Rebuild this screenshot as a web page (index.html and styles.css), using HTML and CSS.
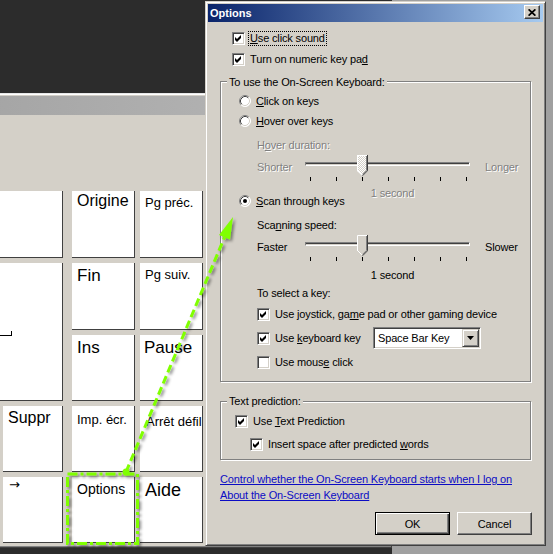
FILE: index.html
```
<!DOCTYPE html>
<html>
<head>
<meta charset="utf-8">
<title>Options</title>
<link rel="stylesheet" href="styles.css">
</head>
<body>
<div class="screen">
  <div class="osk">
    <div class="osk-title"></div>
    <div class="osk-body">
      <div class="keys">
        <div class="key col-wide row1"></div>
        <div class="key col-b row1 k-origine">Origine</div>
        <div class="key col-c row1 k-pgprec">Pg préc.</div>
        <div class="key col-wide rows23 k-enter"><span class="enter-glyph"></span></div>
        <div class="key col-b row2 k-fin">Fin</div>
        <div class="key col-c row2 k-pgsuiv">Pg suiv.</div>
        <div class="key col-b row3 k-ins">Ins</div>
        <div class="key col-c row3 k-pause">Pause</div>
        <div class="key col-a row4 k-suppr">Suppr</div>
        <div class="key col-b row4 k-imp">Imp. écr.</div>
        <div class="key col-c row4 k-arret">Arrêt défil</div>
        <div class="key col-a row5 k-arrow">→</div>
        <div class="key col-b row5 k-options">Options</div>
        <div class="key col-c row5 k-aide">Aide</div>
      </div>
    </div>
  </div>

  <div class="dialog">
    <div class="titlebar">
      <span class="title-text">Options</span>
      <span class="close-btn"><svg width="8" height="7" viewBox="0 0 8 7"><path d="M0.6 0.3 L7.4 6.7 M7.4 0.3 L0.6 6.7" stroke="#000" stroke-width="1.7" fill="none"/></svg></span>
    </div>
    <div class="dlg-body">
      <div class="row top-cb first">
        <span class="cb"><svg width="11" height="11" viewBox="0 0 11 11"><polygon points="2,4 4,6 8,2 8,5 4,9 2,7" fill="#000"/></svg></span>
        <span class="focus"><u>U</u>se click sound</span>
      </div>
      <div class="row top-cb second">
        <span class="cb"><svg width="11" height="11" viewBox="0 0 11 11"><polygon points="2,4 4,6 8,2 8,5 4,9 2,7" fill="#000"/></svg></span>
        <span class="txt">Turn on numeric key pa<u>d</u></span>
      </div>

      <div class="group g1">
        <div class="legend">To use the On-Screen Keyboard:</div>
        <div class="row radio-row rr1">
          <span class="radio"><svg width="12" height="12" viewBox="0 0 12 12"><circle cx="6" cy="6" r="5.5" fill="#fff"/><path d="M2.11 9.89 A5.5 5.5 0 0 1 9.89 2.11" stroke="#808080" fill="none"/><path d="M9.89 2.11 A5.5 5.5 0 0 1 2.11 9.89" stroke="#fff" fill="none"/><path d="M2.82 9.18 A4.5 4.5 0 0 1 9.18 2.82" stroke="#404040" fill="none"/><path d="M9.18 2.82 A4.5 4.5 0 0 1 2.82 9.18" stroke="#d4d0c8" fill="none"/></svg></span>
          <span class="txt"><u>C</u>lick on keys</span>
        </div>
        <div class="row radio-row">
          <span class="radio"><svg width="12" height="12" viewBox="0 0 12 12"><circle cx="6" cy="6" r="5.5" fill="#fff"/><path d="M2.11 9.89 A5.5 5.5 0 0 1 9.89 2.11" stroke="#808080" fill="none"/><path d="M9.89 2.11 A5.5 5.5 0 0 1 2.11 9.89" stroke="#fff" fill="none"/><path d="M2.82 9.18 A4.5 4.5 0 0 1 9.18 2.82" stroke="#404040" fill="none"/><path d="M9.18 2.82 A4.5 4.5 0 0 1 2.82 9.18" stroke="#d4d0c8" fill="none"/></svg></span>
          <span class="txt"><u>H</u>over over keys</span>
        </div>
        <div class="sub-label dis lab-hover">H<u>o</u>ver duration:</div>
        <div class="slider">
          <span class="sl-lab dis">Shorter</span>
          <div class="track">
            <div class="channel"></div>
            <div class="ticks"><i></i><i></i><i></i><i></i><i></i><i></i><i></i></div>
            <svg class="thumb" width="11" height="21" viewBox="0 0 11 21">
              <defs><pattern id="dither" width="2" height="2" patternUnits="userSpaceOnUse"><rect width="2" height="2" fill="#d4d0c8"/><rect width="1" height="1" fill="#fff"/><rect x="1" y="1" width="1" height="1" fill="#fff"/></pattern></defs>
              <polygon points="0,0 11,0 11,16 5.5,21 0,16" fill="url(#dither)"/>
              <path d="M0.5 16 V0.5 H10" stroke="#fff" fill="none"/>
              <path d="M0.5 15.5 L5.5 20.5" stroke="#fff" fill="none"/>
              <path d="M10.5 0 V15.8 L5.5 20.8" stroke="#404040" fill="none"/>
              <path d="M9.5 1 V15.4 L5.5 19.4" stroke="#808080" fill="none"/>
            </svg>
          </div>
          <span class="sl-lab right dis">Longer</span>
        </div>
        <div class="value dis">1 second</div>
        <div class="row radio-row rr3">
          <span class="radio"><svg width="12" height="12" viewBox="0 0 12 12"><circle cx="6" cy="6" r="5.5" fill="#fff"/><path d="M2.11 9.89 A5.5 5.5 0 0 1 9.89 2.11" stroke="#808080" fill="none"/><path d="M9.89 2.11 A5.5 5.5 0 0 1 2.11 9.89" stroke="#fff" fill="none"/><path d="M2.82 9.18 A4.5 4.5 0 0 1 9.18 2.82" stroke="#404040" fill="none"/><path d="M9.18 2.82 A4.5 4.5 0 0 1 2.82 9.18" stroke="#d4d0c8" fill="none"/><circle cx="6" cy="6" r="2" fill="#000"/></svg></span>
          <span class="txt"><u>S</u>can through keys</span>
        </div>
        <div class="sub-label lab-scan">Sca<u>n</u>ning speed:</div>
        <div class="slider s2">
          <span class="sl-lab">Faster</span>
          <div class="track">
            <div class="channel"></div>
            <div class="ticks"><i></i><i></i><i></i><i></i><i></i><i></i><i></i></div>
            <svg class="thumb" width="11" height="21" viewBox="0 0 11 21">
              <polygon points="0,0 11,0 11,16 5.5,21 0,16" fill="#d4d0c8"/>
              <path d="M0.5 16 V0.5 H10" stroke="#fff" fill="none"/>
              <path d="M0.5 15.5 L5.5 20.5" stroke="#fff" fill="none"/>
              <path d="M10.5 0 V15.8 L5.5 20.8" stroke="#404040" fill="none"/>
              <path d="M9.5 1 V15.4 L5.5 19.4" stroke="#808080" fill="none"/>
            </svg>
          </div>
          <span class="sl-lab right">Slower</span>
        </div>
        <div class="value v2">1 second</div>
        <div class="sub-label lab-select">To select a key:</div>
        <div class="row sub-cb cb-joy">
          <span class="cb"><svg width="11" height="11" viewBox="0 0 11 11"><polygon points="2,4 4,6 8,2 8,5 4,9 2,7" fill="#000"/></svg></span>
          <span class="txt">Use joystick, ga<u>m</u>e pad or other gaming device</span>
        </div>
        <div class="row sub-cb cb-kb">
          <span class="cb"><svg width="11" height="11" viewBox="0 0 11 11"><polygon points="2,4 4,6 8,2 8,5 4,9 2,7" fill="#000"/></svg></span>
          <span class="txt kb-label">Use <u>k</u>eyboard key</span>
          <div class="combo">
            <span class="combo-text">Space Bar Key</span>
            <span class="combo-btn"><svg width="7" height="4" viewBox="0 0 7 4"><polygon points="0,0 7,0 3.5,4" fill="#000"/></svg></span>
          </div>
        </div>
        <div class="row sub-cb cb-mouse">
          <span class="cb"></span>
          <span class="txt">Use mous<u>e</u> click</span>
        </div>
      </div>

      <div class="group g2">
        <div class="legend leg2">Text prediction:</div>
        <div class="row tp-cb">
          <span class="cb"><svg width="11" height="11" viewBox="0 0 11 11"><polygon points="2,4 4,6 8,2 8,5 4,9 2,7" fill="#000"/></svg></span>
          <span class="txt">Use <u>T</u>ext Prediction</span>
        </div>
        <div class="row tp-cb ins">
          <span class="cb"><svg width="11" height="11" viewBox="0 0 11 11"><polygon points="2,4 4,6 8,2 8,5 4,9 2,7" fill="#000"/></svg></span>
          <span class="txt">Insert space after predicted <u>w</u>ords</span>
        </div>
      </div>

      <a class="link first-link" href="#">Control whether the On-Screen Keyboard starts when I log on</a>
      <a class="link" href="#">About the On-Screen Keyboard</a>

      <div class="buttons">
        <span class="btn default">OK</span>
        <span class="btn">Cancel</span>
      </div>
    </div>
  </div>

  <svg class="annot" width="553" height="554" viewBox="0 0 553 554">
    <defs>
      <filter id="sh" x="-20%" y="-20%" width="140%" height="140%">
        <feDropShadow dx="2" dy="2" stdDeviation="1.5" flood-color="#000" flood-opacity="0.45"/>
      </filter>
    </defs>
    <g filter="url(#sh)">
      <rect x="67.5" y="474" width="70" height="69.5" fill="none" stroke="#80ff00" stroke-width="3" stroke-dasharray="10 3 3 3"/>
      <line x1="126" y1="472" x2="224.5" y2="237.3" stroke="#80ff00" stroke-width="3" stroke-dasharray="8 4"/>
      <circle cx="126" cy="472" r="3.5" fill="#80ff00"/>
      <polygon points="233,217 230,239.6 219,235" fill="#80ff00"/>
    </g>
  </svg>
</div>
</body>
</html>
```

FILE: styles.css
```
* { box-sizing: border-box; }
html, body { margin: 0; padding: 0; }
body { width: 553px; height: 554px; overflow: hidden; font-family: "Liberation Sans", Arial, sans-serif; }

.screen {
  position: relative;
  width: 553px;
  height: 554px;
  overflow: hidden;
  background: linear-gradient(to right, #2c2c2c 392px, #a0a0a0 392px);
}

/* On-screen keyboard window (behind) */
.osk {
  position: absolute;
  left: -72px;
  top: 93px;
  width: 464px;
  height: 455px;
  background: #d4d0c8;
  border-top: 1px solid #e8e8e8;
  border-bottom: 1px solid #404040;
  border-right: 1px solid #404040;
  box-shadow: inset 0 1px #fff, inset -1px -1px #808080;
  padding-top: 2px;
}
.osk-title { height: 19px; background: linear-gradient(to right, #a2a2a2, #bababa); }
.osk-body { padding: 76px 0 0 10px; }

.keys {
  display: grid;
  grid-template-columns: 60px 60px 67px 63px;
  grid-template-rows: 67px 67px 66px 66px 66px;
  column-gap: 5px;
  row-gap: 5px;
}
.key {
  background: #fff;
  border-right: 1px solid #404040;
  border-bottom: 1px solid #404040;
  color: #000;
  padding: 1px 5px 0 5px;
  white-space: nowrap;
  line-height: normal;
}
.col-wide { grid-column: 1 / 3; }
.col-a { grid-column: 2; }
.col-b { grid-column: 3; justify-self: end; width: 63px; }
.col-c { grid-column: 4; }
.row1 { grid-row: 1; }
.row2 { grid-row: 2; }
.row3 { grid-row: 3; }
.rows23 { grid-row: 2 / 4; }
.row4 { grid-row: 4; }
.row5 { grid-row: 5; }

.k-enter { display: flex; align-items: center; padding-left: 62px; }
.enter-glyph { width: 12px; height: 5px; border-right: 1px solid #000; border-bottom: 1px solid #000; margin-top: 2px; }

.k-origine { font-size: 16px; padding-top: 1px; }
.k-pgprec { font-size: 13px; padding-top: 4px; }
.k-fin { font-size: 17px; padding-top: 3px; }
.k-pgsuiv { font-size: 13px; padding-top: 4px; }
.k-ins { font-size: 17px; padding-top: 3px; }
.k-pause { font-size: 17px; padding-top: 3px; padding-left: 4px; }
.k-suppr { font-size: 16px; padding-top: 3px; }
.k-imp { font-size: 13px; padding-top: 6px; }
.k-arret { font-size: 13px; padding-top: 8px; padding-left: 6px; overflow: visible; }
.k-arrow { font-size: 13px; padding-top: 0; padding-left: 6px; font-family: "DejaVu Sans", sans-serif; }
.k-options { font-size: 14px; padding-top: 4px; }
.k-aide { font-size: 18px; padding-top: 3px; }

/* Dialog */
.dialog {
  position: absolute;
  left: 205px;
  top: 1px;
  width: 341px;
  height: 545px;
  background: #d4d0c8;
  border: 1px solid;
  border-color: #d4d0c8 #404040 #404040 #d4d0c8;
  box-shadow: inset 1px 1px #fff, inset -1px -1px #808080;
  padding: 2px;
  font-size: 11px;
  letter-spacing: -0.15px;
  color: #000;
}
.titlebar {
  height: 18px;
  display: flex;
  align-items: flex-start;
  justify-content: space-between;
  padding: 0 3px 0 2px;
  background: linear-gradient(to right, #0a246a, #a6caf0);
}
.title-text { color: #fff; font-weight: bold; line-height: 18px; letter-spacing: 0; }
.close-btn {
  margin-top: 1px;
  width: 16px;
  height: 14px;
  background: #d4d0c8;
  border: 1px solid;
  border-color: #fff #404040 #404040 #fff;
  box-shadow: inset -1px -1px #808080;
  display: flex;
  align-items: center;
  justify-content: center;
}
.close-btn svg { display: block; }

.dlg-body { display: flex; flex-direction: column; }

.row { display: flex; align-items: center; height: 20px; white-space: nowrap; }
.txt { margin-left: 5px; }

.cb {
  width: 13px;
  height: 13px;
  flex: none;
  background: #fff;
  border: 1px solid;
  border-color: #808080 #fff #fff #808080;
  box-shadow: inset 1px 1px #404040, inset -1px -1px #d4d0c8;
}
.cb svg { display: block; }
.radio { width: 12px; height: 12px; flex: none; }
.radio svg { display: block; }

.focus { margin-left: 3px; border: 1px dotted #000; padding: 0 1px; line-height: 13px; }

.top-cb { margin-left: 24px; }
.top-cb.first { margin-top: 6px; }
.top-cb.second { margin-top: 1px; }

.group {
  display: flex;
  flex-direction: column;
  margin-left: 12px;
  width: 311px;
  border: 1px solid #808080;
  box-shadow: inset 1px 1px #fff, 1px 1px #fff;
}
.g1 { margin-top: 12px; height: 301px; }
.g2 { margin-top: 19px; height: 59px; }

.legend {
  align-self: flex-start;
  margin: -7px 0 0 6px;
  padding: 0 2px;
  background: #d4d0c8;
  line-height: 14px;
}
.leg2 { margin-top: -8px; }

.radio-row { margin-left: 18px; }
.rr1 { margin-top: 2px; }
.rr3 { margin-top: -9px; }

.sub-label { margin-left: 36px; line-height: 14px; }
.lab-hover { margin-top: 7px; }
.lab-scan { margin-top: 7px; }
.lab-select { margin-top: 4px; }

.dis { color: #808080; text-shadow: 1px 1px 0 #fff; }

.slider { display: flex; margin-left: 36px; margin-top: 3px; height: 26px; }
.sl-lab { width: 48px; margin-top: 5px; line-height: 14px; }
.sl-lab.right { width: auto; margin-left: 15px; }
.track { position: relative; width: 165px; }
.channel {
  margin-top: 7px;
  height: 4px;
  border: 1px solid;
  border-color: #808080 #fff #fff #808080;
  background: linear-gradient(#404040 50%, #d4d0c8 50%);
}
.ticks { display: flex; justify-content: space-between; margin-top: 11px; height: 4px; padding: 0 3px 0 5px; }
.ticks i { width: 1px; height: 4px; background: #000; }
.thumb { position: absolute; left: 52px; top: 0; }

.value { margin-left: 36px; width: 271px; text-align: center; line-height: 14px; margin-top: 5px; }
.value.v2 { margin-top: 7px; }

.sub-cb { margin-left: 36px; }
.cb-joy { margin-top: 4px; }
.cb-kb { margin-top: 2px; height: 24px; }
.cb-mouse { margin-top: 2px; }
.kb-label { width: 98px; }

.combo {
  width: 108px;
  height: 22px;
  display: flex;
  background: #fff;
  border: 1px solid;
  border-color: #808080 #fff #fff #808080;
  box-shadow: inset 1px 1px #404040, inset -1px -1px #d4d0c8;
  padding: 1px;
}
.combo-text { flex: 1; padding-left: 3px; line-height: 18px; }
.combo-btn {
  width: 17px;
  height: 18px;
  background: #d4d0c8;
  border: 1px solid;
  border-color: #d4d0c8 #404040 #404040 #d4d0c8;
  box-shadow: inset 1px 1px #fff, inset -1px -1px #808080;
  display: flex;
  align-items: center;
  justify-content: center;
}
.combo-btn svg { display: block; }

.tp-cb { margin-left: 14px; margin-top: 3px; }
.tp-cb.ins { margin-left: 29px; }

.link {
  align-self: flex-start;
  margin-left: 12px;
  color: #0c0cc4;
  text-decoration: underline;
  line-height: 16px;
  white-space: nowrap;
}
.first-link { margin-top: 11px; }

.buttons { display: flex; justify-content: flex-end; gap: 7px; margin-top: 9px; margin-right: 11px; }
.btn {
  width: 75px;
  height: 23px;
  background: #d4d0c8;
  border: 1px solid;
  border-color: #fff #404040 #404040 #fff;
  box-shadow: inset -1px -1px #808080;
  display: flex;
  align-items: center;
  justify-content: center;
}
.btn.default {
  border-color: #000;
  box-shadow: inset 1px 1px #fff, inset -1px -1px #404040, inset -2px -2px #808080;
}

.annot { position: absolute; left: 0; top: 0; pointer-events: none; }
```
